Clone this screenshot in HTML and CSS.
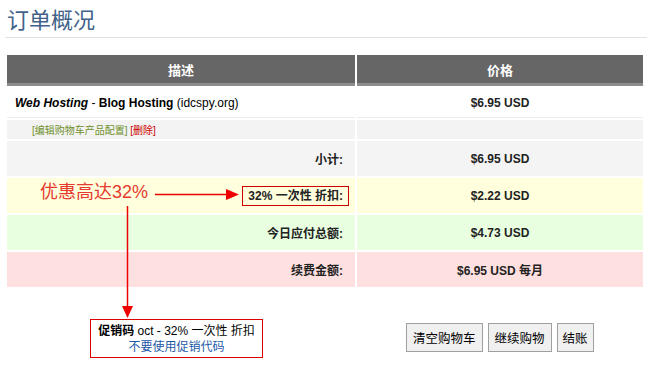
FILE: index.html
```html
<!DOCTYPE html>
<html lang="zh-CN">
<head>
  <meta charset="UTF-8">
  <meta name="viewport" content="width=device-width, initial-scale=1.0">
  <title>订单概况</title>
  <link rel="stylesheet" href="styles.css">
</head>
<body>
  <div class="page">
    <h1 class="title">订单概况</h1>

    <table class="cart">
      <thead>
        <tr>
          <th class="col-desc">描述</th>
          <th class="col-price">价格</th>
        </tr>
      </thead>
      <tbody>
        <tr class="item">
          <td class="desc"><em>Web Hosting</em> - <strong>Blog Hosting</strong> <span class="domain">(idcspy.org)</span></td>
          <td class="amount">$6.95 USD</td>
        </tr>
        <tr class="item-links">
          <td class="links"><a href="#" class="edit">[编辑购物车产品配置]</a> <a href="#" class="remove">[删除]</a></td>
          <td></td>
        </tr>
        <tr class="subtotal">
          <td class="label">小计:</td>
          <td class="amount">$6.95 USD</td>
        </tr>
        <tr class="discount">
          <td class="label"><span class="mark">32% 一次性 折扣:</span></td>
          <td class="amount">$2.22 USD</td>
        </tr>
        <tr class="total">
          <td class="label">今日应付总额:</td>
          <td class="amount">$4.73 USD</td>
        </tr>
        <tr class="recurring">
          <td class="label">续费金额:</td>
          <td class="amount">$6.95 USD 每月</td>
        </tr>
      </tbody>
    </table>

    <div class="footer">
      <div class="promo">
        <div><strong>促销码</strong> oct - 32% 一次性 折扣</div>
        <a href="#" class="promo-remove">不要使用促销代码</a>
      </div>
      <div class="actions">
        <button type="button">清空购物车</button>
        <button type="button">继续购物</button>
        <button type="button" class="narrow">结账</button>
      </div>
    </div>

    <!-- annotation drawn over the page -->
    <span class="note">优惠高达32%</span>
    <svg class="arrows" width="647" height="374" viewBox="0 0 647 374">
      <line x1="155" y1="194.5" x2="228" y2="194.5" stroke="#e00" stroke-width="1.5"/>
      <polygon points="226,189 239,194.5 226,200" fill="#e00"/>
      <line x1="127.5" y1="206" x2="127.5" y2="308" stroke="#e00" stroke-width="1.5"/>
      <polygon points="122,306 133,306 127.5,318" fill="#e00"/>
    </svg>
  </div>
</body>
</html>
```

FILE: styles.css
```css
body {
  margin: 0;
  font-family: "Liberation Sans", Arial, "Noto Sans CJK SC", sans-serif;
  font-size: 12px;
  color: #000;
  background: #fff;
}
.page {
  position: relative;
  width: 647px;
  height: 374px;
  overflow: hidden;
}
.title {
  margin: 0 0 0 5px;
  padding: 6px 0 0 2px;
  height: 31px;
  font-size: 22px;
  line-height: 30px;
  font-weight: normal;
  color: #42628a;
  border-bottom: 1px solid #e2e2e2;
}
.cart {
  margin: 15px 0 0 5px;
  width: 640px;
  border-collapse: separate;
  border-spacing: 2px;
}
.cart th {
  height: 28px;
  padding: 0;
  background: #666;
  border-bottom: 3px solid #8c8c8c;
  color: #fff;
  font-size: 13px;
  font-weight: bold;
  text-align: center;
}
.col-desc {
  width: 348px;
}
.cart td {
  padding: 0;
}
.item td {
  height: 29px;
  border-bottom: 1px solid #ececec;
}
.desc {
  padding-left: 8px !important;
}
.desc em {
  font-weight: bold;
}
.desc strong {
  font-weight: bold;
}
.item-links td {
  height: 19px;
  background: #f3f3f3;
}
.links {
  padding-left: 25px !important;
  font-size: 10px;
}
.links a {
  text-decoration: none;
}
.edit {
  color: #6f8f2a;
}
.remove {
  color: #c00;
}
.label {
  height: 35px;
  padding-right: 12px !important;
  text-align: right;
  font-weight: bold;
  color: #222;
}
.amount {
  text-align: center;
  font-weight: bold;
  color: #222;
}
.subtotal td {
  background: #f4f4f4;
}
.discount td {
  background: #ffffde;
}
.total td {
  background: #e8ffe0;
}
.recurring td {
  background: #ffe0e0;
}
.mark {
  display: inline-block;
  padding: 2px 5px 1px 5px;
  margin-right: -6px;
  border: 1px solid #c00;
  line-height: 15px;
}
.footer {
  display: flex;
  align-items: flex-start;
  margin-top: 30px;
  padding-left: 90px;
}
.promo {
  width: 171px;
  padding: 3px 0 2px;
  border: 1px solid #d00;
  text-align: center;
  line-height: 16px;
}
.promo-remove {
  color: #1d5aa8;
  text-decoration: none;
}
.actions {
  display: flex;
  gap: 5px;
  margin: 4px 0 0 143px;
}
.actions button {
  height: 29px;
  padding: 0 6px;
  background: #f0f0f0;
  border: 1px solid #a0a0a0;
  border-radius: 0;
  font-family: "Liberation Sans", Arial, "Noto Sans CJK SC", sans-serif;
  font-size: 12.5px;
  color: #000;
  cursor: pointer;
}
.actions .narrow {
  padding: 0 5px;
}
.note {
  position: absolute;
  left: 40px;
  top: 181px;
  font-size: 18px;
  line-height: 22px;
  color: #e53a2e;
}
.arrows {
  position: absolute;
  left: 0;
  top: 0;
  pointer-events: none;
}
```
